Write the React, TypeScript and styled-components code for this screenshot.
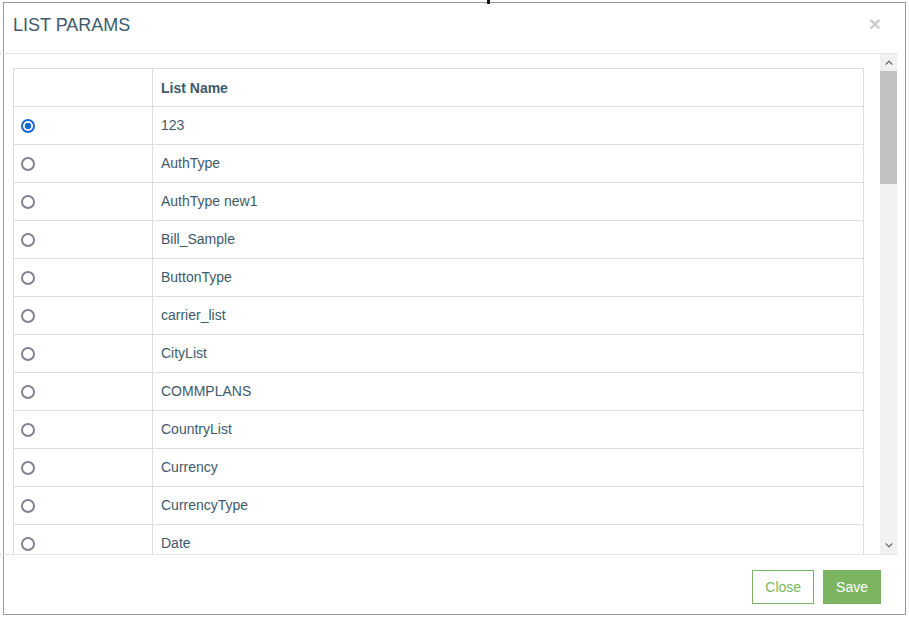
import { useState } from 'react';
import styled, { createGlobalStyle } from 'styled-components';

const GlobalStyle = createGlobalStyle`
  html, body {
    margin: 0;
    padding: 0;
    background: #fff;
    font-family: 'Liberation Sans', Arial, sans-serif;
  }
`;

const Page = styled.div`
  position: relative;
  width: 909px;
  height: 618px;
  padding: 2px 0 0 3px;
  box-sizing: border-box;
`;

const CursorMark = styled.div`
  position: absolute;
  top: 0;
  left: 487px;
  width: 3px;
  height: 4px;
  background: #111;
`;

const Modal = styled.div`
  width: 903px;
  height: 613px;
  box-sizing: border-box;
  border: 1px solid #999;
  background: #fff;
  display: flex;
  flex-direction: column;
`;

const Header = styled.div`
  height: 50px;
  flex: none;
  box-sizing: border-box;
  padding: 10px 24px 0 9px;
  display: flex;
  justify-content: space-between;
  align-items: flex-start;
`;

const Title = styled.h4`
  margin: 0;
  font-size: 18px;
  font-weight: normal;
  line-height: 24px;
  color: #3d5a6b;
`;

const CloseX = styled.button`
  border: 0;
  background: none;
  padding: 0;
  font-family: 'Liberation Sans', Arial, sans-serif;
  font-size: 21px;
  font-weight: bold;
  line-height: 1;
  color: #000;
  opacity: 0.2;
  cursor: pointer;
`;

const Body = styled.div`
  flex: none;
  height: 502px;
  box-sizing: border-box;
  margin: 0 8px 0 -4px;
  border-top: 1px solid #e5e5e5;
  border-bottom: 1px solid #e5e5e5;
  display: flex;
`;

const ScrollArea = styled.div`
  flex: 1;
  overflow-y: auto;
  scrollbar-width: none;
  padding: 14px 15px 15px 13px;
  &::-webkit-scrollbar {
    display: none;
  }
`;

const Rail = styled.div`
  width: 17px;
  flex: none;
  background: #f1f1f1;
  display: flex;
  flex-direction: column;
`;

const RailButton = styled.div`
  height: 17px;
  flex: none;
  display: flex;
  align-items: center;
  justify-content: center;
`;

const Thumb = styled.div`
  height: 113px;
  flex: none;
  background: #c1c1c1;
`;

const RailSpacer = styled.div`
  flex: 1;
`;

const Table = styled.table`
  width: 851px;
  border-collapse: collapse;
  border: 1px solid #ddd;
  font-size: 14px;
  color: #3d5a6b;
`;

const HeadCell = styled.th<{ narrow?: boolean }>`
  height: 37px;
  padding: 0 8px;
  width: ${({ narrow }) => (narrow ? '122px' : 'auto')};
  border: 1px solid #ddd;
  text-align: left;
  font-weight: bold;
  vertical-align: middle;
`;

const Cell = styled.td`
  height: 35px;
  padding: 0 8px 2px;
  border: 1px solid #ddd;
  vertical-align: middle;
`;

const Radio = styled.input`
  appearance: none;
  margin: 0 0 0 -1px;
  width: 14px;
  height: 14px;
  box-sizing: border-box;
  border: 2px solid #86818f;
  border-radius: 50%;
  background: #fff;
  vertical-align: middle;
  cursor: pointer;
  &:checked {
    border-color: #1766d6;
    background: radial-gradient(circle, #1766d6 0 3px, #fff 3.6px);
  }
`;

const Footer = styled.div`
  flex: 1;
  display: flex;
  justify-content: flex-end;
  align-items: flex-start;
  gap: 9px;
  padding: 15px 24px 0 0;
`;

const Button = styled.button<{ primary?: boolean }>`
  height: 34px;
  padding: 0 12px;
  font-family: 'Liberation Sans', Arial, sans-serif;
  font-size: 14px;
  border: 1px solid #7cb561;
  background: ${({ primary }) => (primary ? '#7cb561' : '#fff')};
  color: ${({ primary }) => (primary ? '#fff' : '#7cb561')};
  cursor: pointer;
`;

const names = [
  '123', 'AuthType', 'AuthType new1', 'Bill_Sample', 'ButtonType', 'carrier_list', 'CityList',
  'COMMPLANS', 'CountryList', 'Currency', 'CurrencyType', 'Date', 'DayOfWeek', 'DeviceType',
  'DocType', 'Environment', 'EventType', 'FileFormat', 'Frequency', 'Gender', 'HttpMethod',
  'IdType', 'Language', 'ListType', 'LogLevel', 'MaritalStatus', 'Month', 'NetworkType',
  'OrderStatus', 'PaymentMode', 'PaymentType', 'PlanType', 'Priority', 'ProductType',
  'Protocol', 'Region', 'RequestType', 'ResponseCode', 'Role', 'ServiceType', 'StateList',
  'Status', 'SubscriberType', 'TaxType', 'TimeZone', 'TransactionType', 'UnitType',
  'UserType', 'ValidationType', 'Week', 'YesNo', 'ZoneList',
];

const Arrow = ({ up }: { up?: boolean }) => (
  <svg width="8" height="5" viewBox="0 0 8 5">
    <path d={up ? 'M0 4.5 L4 0.5 L8 4.5 L6.5 4.5 L4 2 L1.5 4.5 Z' : 'M0 0.5 L4 4.5 L8 0.5 L6.5 0.5 L4 3 L1.5 0.5 Z'} fill="#505050" />
  </svg>
);

const App = () => {
  const [selected, setSelected] = useState('123');
  const [scroll, setScroll] = useState(0);
  return (
    <Page>
      <GlobalStyle />
      <CursorMark />
      <Modal>
        <Header>
          <Title>LIST PARAMS</Title>
          <CloseX aria-label="Close">×</CloseX>
        </Header>
        <Body>
          <ScrollArea
            onScroll={(e) => {
              const el = e.currentTarget;
              setScroll(el.scrollTop / Math.max(1, el.scrollHeight - el.clientHeight));
            }}
          >
            <Table>
              <thead>
                <tr>
                  <HeadCell narrow />
                  <HeadCell>List Name</HeadCell>
                </tr>
              </thead>
              <tbody>
                {names.map((name) => (
                  <tr key={name}>
                    <Cell>
                      <Radio
                        type="radio"
                        name="listParam"
                        checked={selected === name}
                        onChange={() => setSelected(name)}
                      />
                    </Cell>
                    <Cell>{name}</Cell>
                  </tr>
                ))}
              </tbody>
            </Table>
          </ScrollArea>
          <Rail>
            <RailButton>
              <Arrow up />
            </RailButton>
            <Thumb style={{ marginTop: `${Math.round(scroll * 353)}px` }} />
            <RailSpacer />
            <RailButton>
              <Arrow />
            </RailButton>
          </Rail>
        </Body>
        <Footer>
          <Button>Close</Button>
          <Button primary>Save</Button>
        </Footer>
      </Modal>
    </Page>
  );
};

export default App;
